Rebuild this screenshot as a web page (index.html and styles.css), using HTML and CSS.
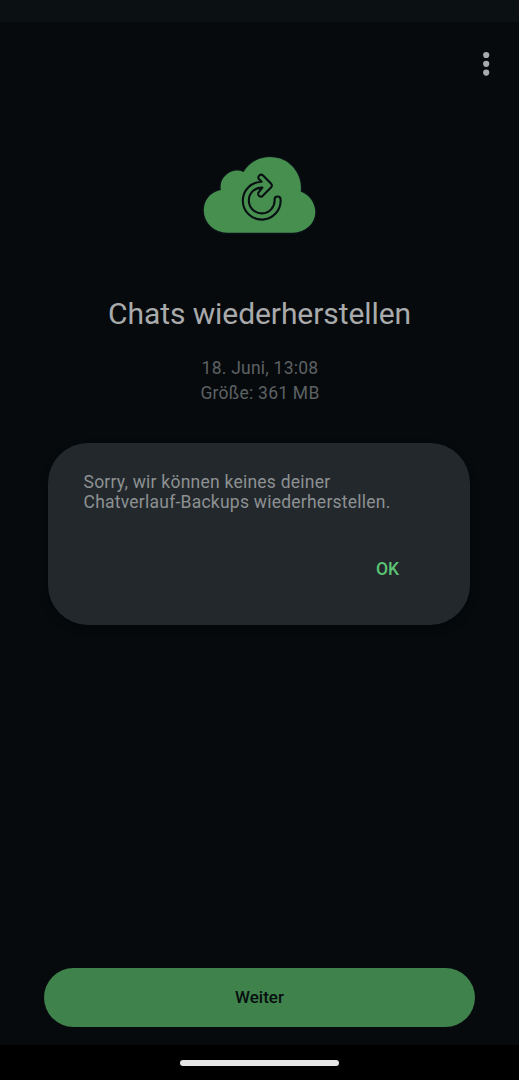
FILE: index.html
```html
<!DOCTYPE html>
<html lang="de">

<head>
    <meta charset="UTF-8">
    <meta name="viewport" content="width=device-width, initial-scale=1.0">
    <title>Chats wiederherstellen</title>
    <link rel="stylesheet" href="styles.css">
</head>

<body>
    <div class="status-bar"></div>

    <header class="toolbar">
        <button class="menu-button" aria-label="Weitere Optionen">
            <svg width="8" height="26" viewBox="0 0 8 26">
                <circle cx="4.2" cy="4" r="3.1" />
                <circle cx="4.2" cy="12.8" r="3.1" />
                <circle cx="4.2" cy="21.6" r="3.1" />
            </svg>
        </button>
    </header>

    <main class="content">
        <svg class="cloud" width="129" height="100" viewBox="0 0 129 100">
            <path class="cloud-shape" d="M32 87.7A23.2 22.2 0 0 1 8.8 65.5A20.5 20.5 0 0 1 25.8 44.9A16.6 16.6 0 0 1 48.5 27A30.9 30.9 0 0 1 105.7 46.6A22.5 22.5 0 0 1 120.3 67A22.4 20.7 0 0 1 98 87.7Z" />
            <path class="cloud-arrow" d="M79.6 54.5A3 3 0 0 1 85.6 54.5A18.9 18.9 0 1 1 66.6 36.8L63.6 33.8A2.9 2.9 0 0 1 67.8 30.2L76.2 38.8Q77.6 40.5 76.2 42.2L68 50.6A2.7 2.7 0 0 1 63.8 47.2L67.4 42.6A12.9 12.9 0 1 0 79.6 54.5Z" />
        </svg>

        <h1>Chats wiederherstellen</h1>
        <p class="backup-info">18. Juni, 13:08<br>Größe: 361 MB</p>

        <div class="dialog" role="alertdialog">
            <p>Sorry, wir können keines deiner<br>Chatverlauf-Backups wiederherstellen.</p>
            <button class="ok-button">OK</button>
        </div>

        <button class="next-button">Weiter</button>
    </main>

    <footer class="nav-bar">
        <div class="nav-handle"></div>
    </footer>
</body>

</html>
```

FILE: styles.css
```css
* {
    box-sizing: border-box;
}

body {
    display: flex;
    flex-direction: column;
    height: 100vh;
    margin: 0;
    overflow: hidden;
    background: #060a0d;
    font-family: Roboto, sans-serif;
}

h1,
p {
    margin: 0;
}

button {
    border: none;
    padding: 0;
    background: none;
    font-family: inherit;
    cursor: pointer;
}

.status-bar {
    height: 22px;
    background: #0b1013;
}

.toolbar {
    display: flex;
    justify-content: flex-end;
    height: 123px;
    padding: 29px 29px 0 0;
}

.menu-button {
    width: 8px;
    height: 26px;
}

.menu-button svg {
    display: block;
    fill: #a9aaab;
}

.content {
    flex: 1;
    display: flex;
    flex-direction: column;
    align-items: center;
}

.cloud {
    display: block;
}

.cloud-shape {
    fill: #468f4f;
    stroke: #0b1016;
    stroke-width: 3;
    paint-order: stroke;
}

.cloud-arrow {
    fill: none;
    stroke: #080f12;
    stroke-width: 2.1;
    stroke-linejoin: round;
}

h1 {
    margin-top: 51px;
    color: #a9aaab;
    font-size: 30px;
    font-weight: 400;
    line-height: 36px;
    letter-spacing: -0.08px;
}

.backup-info {
    margin-top: 24px;
    padding-left: 1px;
    color: #5d6163;
    font-size: 17.5px;
    line-height: 25px;
    letter-spacing: 0.24px;
    text-align: center;
}

.dialog {
    display: flex;
    flex-direction: column;
    width: 422px;
    height: 182px;
    margin-top: 36.5px;
    margin-right: 1px;
    padding: 29px 71px 0 35.5px;
    border-radius: 40px;
    background: #23282c;
    box-shadow: 0 4px 8px rgba(0, 0, 0, 0.3);
    color: #8d9193;
    font-size: 17.5px;
    line-height: 20px;
    letter-spacing: 0.24px;
    white-space: nowrap;
}

.ok-button {
    align-self: flex-end;
    margin-top: 47px;
    color: #5bc374;
    font-size: 17.5px;
    font-weight: 500;
    line-height: 20px;
}

.next-button {
    width: 431px;
    height: 59px;
    margin-top: auto;
    margin-bottom: 18px;
    padding-bottom: 2px;
    border-radius: 30px;
    background: #3f824b;
    color: #070e10;
    font-size: 17px;
    font-weight: 500;
}

.nav-bar {
    display: flex;
    justify-content: center;
    align-items: center;
    height: 35px;
    background: #000;
}

.nav-handle {
    width: 159px;
    height: 6px;
    border-radius: 3px;
    background: #e6e6e6;
}
```
